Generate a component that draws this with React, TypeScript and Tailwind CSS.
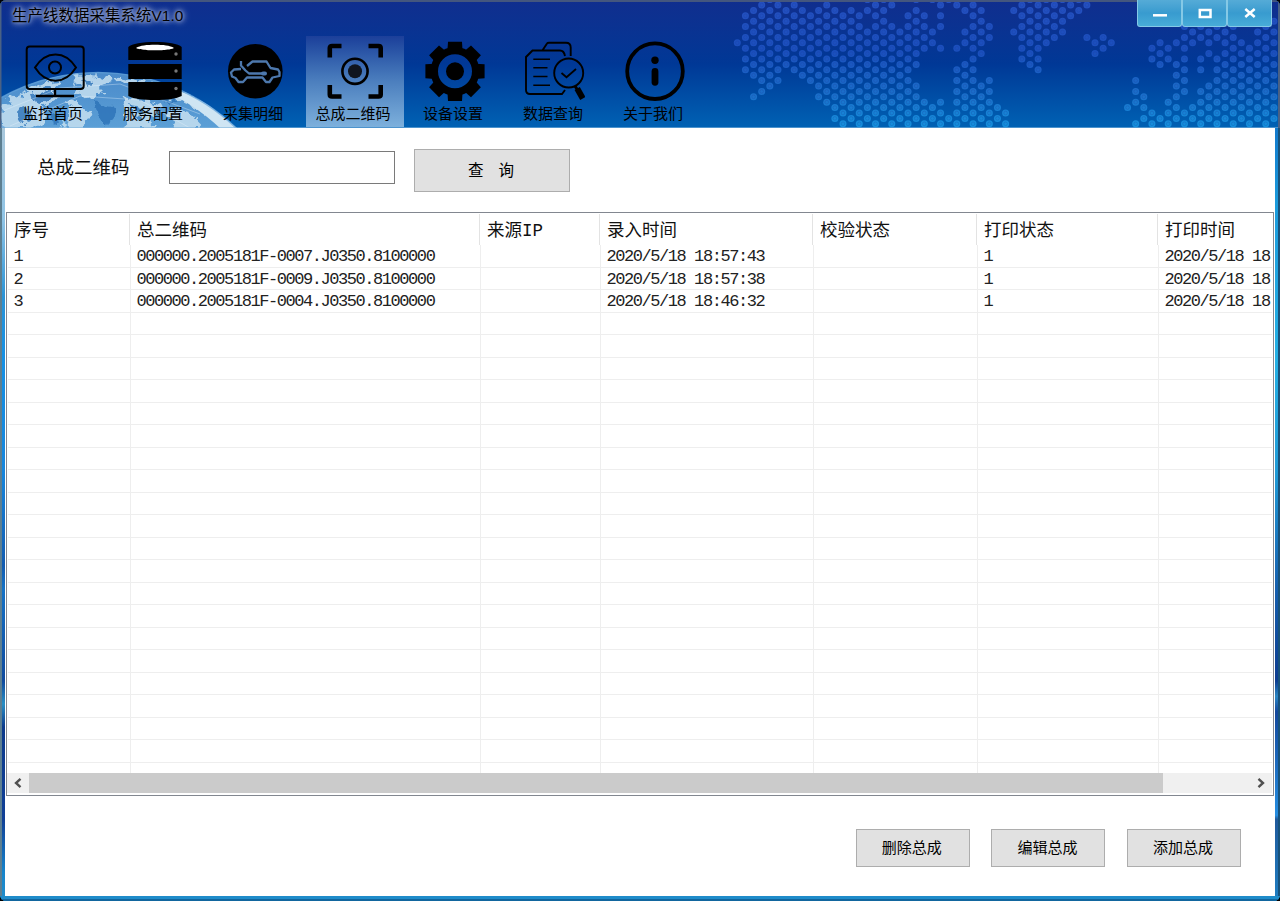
import type { ReactNode } from 'react';

const cjk = "font-['Liberation_Sans','Noto_Sans_CJK_SC',sans-serif]";
const mono = "font-['Liberation_Mono','Noto_Sans_CJK_SC',monospace]";

// Column number -> inclusive runs of half rows that carry a dot.
const DOTS: Record<number, number[][]> = {
  0: [[8, 8]], 1: [[3, 13]], 2: [[2, 14], [18, 18]], 3: [[1, 17]], 4: [[0, 16]], 5: [[1, 15]],
  6: [[2, 12]], 7: [[1, 13]], 8: [[2, 14]], 9: [[3, 15]], 10: [[2, 18]], 11: [[1, 19]],
  12: [[2, 22]], 13: [[3, 23]], 14: [[2, 22]], 15: [[3, 23]], 16: [[0, 2], [6, 22]], 17: [[1, 23]],
  18: [[0, 22]], 19: [[1, 1], [5, 23]], 20: [[6, 22]], 21: [[3, 23]], 22: [[0, 12], [16, 22]],
  23: [[3, 9], [19, 23]], 24: [[0, 0], [6, 8], [20, 22]], 25: [[1, 5], [9, 9], [19, 23]],
  26: [[0, 0], [22, 22]], 27: [[1, 1], [9, 9], [13, 23]], 28: [[2, 2], [6, 8], [12, 22]],
  29: [[1, 23]], 30: [[2, 10], [16, 22]], 31: [[5, 7], [15, 23]], 32: [[20, 22]], 33: [[21, 23]],
  34: [[2, 2], [6, 6]], 35: [[1, 11]], 36: [[0, 12]], 37: [[1, 13]], 38: [[0, 8]], 39: [[1, 7]],
  40: [[0, 6]], 41: [[1, 3]], 42: [[0, 2]], 43: [[1, 1], [7, 7]], 44: [[8, 10]], 45: [[7, 9]],
  46: [[8, 8]], 48: [[20, 20]], 49: [[15, 19], [23, 23]], 50: [[18, 22]], 51: [[9, 11], [21, 23]],
  52: [[8, 12], [22, 22]], 53: [[9, 11], [19, 23]], 54: [[8, 8], [12, 22]], 55: [[5, 17], [21, 23]],
  56: [[6, 8], [20, 22]], 57: [[5, 7], [11, 13], [17, 23]], 58: [[6, 10], [16, 22]],
  59: [[5, 7], [11, 23]], 60: [[6, 22]], 61: [[5, 23]], 62: [[8, 22]], 63: [[9, 23]],
  64: [[6, 22]], 65: [[5, 23]], 66: [[4, 22]],
};

const dots: { x: number; y: number }[] = [];
Object.entries(DOTS).forEach(([c, runs]) =>
  runs.forEach(([a, b]) => {
    for (let r = a; r <= b; r += 2) dots.push({ x: 737.3 + 8.13 * Number(c), y: r * 5.4 - 0.4 });
  }),
);

function HeaderArt() {
  return (
    <svg className="absolute inset-0" width="1280" height="128" viewBox="0 0 1280 128">
      <defs>
        <linearGradient id="dot" gradientUnits="userSpaceOnUse" x1="0" y1="0" x2="0" y2="128">
          <stop offset="0" stopColor="#2550c0" />
          <stop offset="0.4" stopColor="#1a4fbd" />
          <stop offset="0.75" stopColor="#1a70ca" />
          <stop offset="1" stopColor="#1492de" />
        </linearGradient>
        <linearGradient id="globe" gradientUnits="userSpaceOnUse" x1="0" y1="72" x2="0" y2="128">
          <stop offset="0" stopColor="#4a8aca" />
          <stop offset="1" stopColor="#5b9fd6" />
        </linearGradient>
        <clipPath id="disc">
          <circle cx="98" cy="272" r="200" />
        </clipPath>
        <filter id="soft">
          <feGaussianBlur stdDeviation="0.7" />
        </filter>
        <filter id="rough" x="-5%" y="-5%" width="110%" height="110%">
          <feTurbulence type="fractalNoise" baseFrequency="0.11" numOctaves="3" seed="4" />
          <feDisplacementMap in="SourceGraphic" scale="18" xChannelSelector="R" yChannelSelector="G" />
          <feGaussianBlur stdDeviation="0.6" />
        </filter>
      </defs>
      <g fill="url(#dot)">
        {dots.map((d, i) => (
          <circle key={i} cx={d.x} cy={d.y} r="3.5" />
        ))}
      </g>
      <g fill="none" stroke="#1b3d9c" strokeOpacity="0.28" strokeWidth="0.8">
        {dots.map((d, i) => (
          <circle key={i} cx={d.x} cy={d.y} r="1.8" />
        ))}
      </g>
      <g clipPath="url(#disc)">
        <circle cx="98" cy="272" r="200" fill="url(#globe)" />
        <g filter="url(#rough)">
          <path d="M5 128 L0 106 L24 92 L44 84 L62 81 L50 92 L60 97 L42 108 L48 117 L30 128Z M72 78 L96 75 L112 81 L98 88 L104 94 L88 98 L78 90Z M112 76 L150 82 L186 92 L214 108 L206 115 L188 104 L166 95 L140 90 L122 85Z M118 96 L142 98 L160 106 L150 118 L160 130 L122 130 L128 114Z M168 108 L190 113 L206 130 L176 130Z M66 100 L84 104 L92 114 L82 130 L62 130 L70 114Z" fill="#c6dff0" fillOpacity="0.85" />
          <path d="M30 98 L44 90 L52 96 L40 104Z M94 100 L110 104 L116 120 L104 127 L98 116Z M134 84 L160 92 L180 104 L164 102 L142 94Z M16 112 L28 108 L34 118 L22 125Z M132 106 L144 108 L138 118Z M82 80 L94 82 L88 87Z M46 118 L58 112 L60 124Z" fill="#2a72b8" fillOpacity="0.8" />
        </g>
        <path d="M0 112 L60 88 L120 84 L200 114 M10 126 L80 96 L140 100 L190 128" fill="none" stroke="#e8f4fb" strokeOpacity="0.45" strokeWidth="0.8" filter="url(#soft)" />
        <path d="M156 84 Q205 95 241 130 L222 130 Q194 103 156 87Z" fill="#cfe5f3" filter="url(#soft)" />
      </g>
      <circle cx="98" cy="272" r="199.5" fill="none" stroke="#5fa0d8" strokeOpacity="0.7" strokeWidth="1.6" />
      <path d="M0 127.5H1280" stroke="#7fb4dd" strokeOpacity="0.6" />
      <path d="M0.5 0V128M1279 0V128" stroke="#4a6184" strokeWidth="2" />
    </svg>
  );
}

const Ico = ({ children }: { children: ReactNode }) => (
  <svg width="60" height="60" viewBox="0 0 60 60" fill="none" stroke="#000" strokeWidth="2">
    {children}
  </svg>
);

const NAV: { label: string; icon: ReactNode; active?: boolean }[] = [
  {
    label: '监控首页',
    icon: (
      <Ico>
        <rect x="1.7" y="5.5" width="57" height="42.5" rx="3" />
        <path d="M10 26.5C21 9 40 9 51 26.5C40 44 21 44 10 26.5Z" />
        <circle cx="30" cy="26.5" r="6" />
        <path d="M30 48V55M11 55H49" strokeWidth="2.4" />
      </Ico>
    ),
  },
  {
    label: '服务配置',
    icon: (
      <Ico>
        <g stroke="none" fill="#000">
          <path d="M3.3 6C7 2.5 17 1 30 1S53 2.5 56.7 6V19H3.3Z" />
          <path d="M3.3 23H56.7V38H3.3ZM3.3 41H56.7V55C50 58 42 59 30 59S9 58 3.3 55Z" />
          <path d="M11 7C15 4.5 22 3.8 30 3.8S45 4.5 49 7C45 9 40 8.5 37 9.3H23C20 8.5 15 9 11 7Z" fill="#fff" />
          <g fill="#777">
            <circle cx="51" cy="13" r="1.7" />
            <circle cx="51" cy="30" r="1.7" />
            <circle cx="51" cy="47.5" r="1.7" />
          </g>
        </g>
      </Ico>
    ),
  },
  {
    label: '采集明细',
    icon: (
      <Ico>
        <circle cx="30.3" cy="30.3" r="27.3" fill="#000" stroke="none" />
        <path d="M16 20V24.5L20.5 29.5L24 32.5H38M22 25L27.5 20.5H41.5L45.5 27L53 28.5L54.5 31V35L47.5 36.5L44.5 41H41L37.5 36.5H22L18 41H13.5L10.5 37L7 35.5L6 31.5L9 28.5L16 28" stroke="#4d78ad" strokeWidth="2.3" strokeLinejoin="round" />
        <path d="M38 32.5H40" stroke="#4d78ad" strokeWidth="4" strokeLinecap="round" />
      </Ico>
    ),
  },
  {
    label: '总成二维码',
    active: true,
    icon: (
      <Ico>
        <path d="M4.8 16.5V7Q4.8 5 7 5H16.5M43.5 5H53.5Q55.7 5 55.7 7V16.5M55.7 44V53.5Q55.7 55.5 53.5 55.5H43.5M16.5 55.5H7Q4.8 55.5 4.8 53.5V44" strokeWidth="4.6" />
        <circle cx="30" cy="30.3" r="12.6" strokeWidth="2.6" />
        <circle cx="30" cy="30.3" r="7" fill="#10151f" stroke="none" />
      </Ico>
    ),
  },
  {
    label: '设备设置',
    icon: (
      <Ico>
        <circle cx="30" cy="30.3" r="20.7" strokeWidth="7.4" />
        {[0, 45, 90, 135, 180, 225, 270, 315].map((a) => (
          <path key={a} d="M22.4 10L23 0.7H37L37.6 10Z" fill="#000" stroke="none" transform={`rotate(${a} 30 30.3)`} />
        ))}
        <circle cx="30" cy="30.3" r="9" fill="#000" stroke="none" />
      </Ico>
    ),
  },
  {
    label: '数据查询',
    icon: (
      <Ico>
        <path d="M40 49L37 53H5Q1 53 1 49V16L7.5 9.5H35Q39 9.5 40 15M17.7 9L22 2.5Q22.5 1.7 24 1.7H41Q45.7 1.7 45.7 6.5V15" strokeWidth="1.9" />
        <path d="M8.3 18.3H25M8.3 26.7H22.5M8.3 35.5H22.5M8.3 44.2H25" strokeWidth="1.6" />
        <circle cx="43.7" cy="32" r="14.5" strokeWidth="1.9" />
        <path d="M36.5 32L41.5 36.3L51 28" strokeWidth="1.8" />
        <path d="M50 45L52.5 49" strokeWidth="3" />
        <path d="M52.2 47.5L57.8 57.5" strokeWidth="6" />
      </Ico>
    ),
  },
  {
    label: '关于我们',
    icon: (
      <Ico>
        <circle cx="30" cy="30.2" r="27.8" strokeWidth="3.8" />
        <circle cx="30" cy="19.2" r="3.7" fill="#000" stroke="none" />
        <path d="M30 30.5V41.3" strokeWidth="6.8" strokeLinecap="round" />
      </Ico>
    ),
  },
];

const COLS = 'grid grid-cols-[123px_350px_120px_213px_164px_181px_115px]';
const HEAD = ['序号', '总二维码', '来源IP', '录入时间', '校验状态', '打印状态', '打印时间'];
const ROWS = [
  ['1', '000000.2005181F-0007.J0350.8100000', '', '2020/5/18 18:57:43', '', '1', '2020/5/18 18'],
  ['2', '000000.2005181F-0009.J0350.8100000', '', '2020/5/18 18:57:38', '', '1', '2020/5/18 18'],
  ['3', '000000.2005181F-0004.J0350.8100000', '', '2020/5/18 18:46:32', '', '1', '2020/5/18 18'],
];
const EMPTY = ['', '', '', '', '', '', ''];

function WindowButton({ children }: { children: ReactNode }) {
  return (
    <button className="flex h-[27px] w-[45px] items-center justify-center rounded-b-[3px] border border-t-0 border-[#85c9e6] bg-linear-to-b from-[#55abd7] via-[#389bcf] to-[#48acd8]">
      <svg width="16" height="14" viewBox="0 0 16 14" fill="none" stroke="#fff" strokeWidth="2.5">
        {children}
      </svg>
    </button>
  );
}

function ActionButton({ label }: { label: string }) {
  return (
    <button className="flex h-[38px] w-[114px] items-center justify-center border border-[#adadad] bg-[#e1e1e1] pr-[2px] pb-[2px] text-[15px] leading-none text-black">
      {label}
    </button>
  );
}

export default function App() {
  return (
    <div className="h-[901px] w-[1280px] overflow-hidden bg-black">
      <div className={`relative flex h-full w-full flex-col overflow-hidden rounded-[6px] bg-[#1f88c4] text-[#111] ${cjk}`}>
        <header className="relative h-[128px] shrink-0 bg-linear-to-b from-[#102e8e] via-[#003896] to-[#0062b4]">
          <HeaderArt />
          <div className="absolute inset-x-0 top-0 h-[2px] bg-[#44567e]" />
          <div className="relative flex h-[36px] justify-between">
            <h1 className="pt-[8px] pl-[12px] text-[15.4px] leading-[16px] font-normal tracking-[0.1px] whitespace-nowrap text-black [text-shadow:0_0_3px_#8fa0cf,0_0_5px_#8fa0cf,0_0_6px_#8fa0cf,0_0_8px_#8fa0cf]">
              生产线数据采集系统V1.0
            </h1>
            <div className="mr-[8px] flex">
              <WindowButton><path d="M1 9.3H15" /></WindowButton>
              <WindowButton><path d="M2.8 4H13.5V11H2.8Z" /></WindowButton>
              <WindowButton><path d="M3.3 3L12.7 11M12.7 3L3.3 11" /></WindowButton>
            </div>
          </div>
          <nav className="relative flex gap-[2px] pl-[6px]">
            {NAV.map((n) => (
              <a
                key={n.label}
                className={`flex h-[91px] w-[98px] flex-col items-center pt-[5px] ${n.active ? 'bg-linear-to-b from-[#1c3f9a] via-[#4c7fbe] to-[#7db0dc]' : ''}`}
              >
                {n.icon}
                <span className="mt-[5px] -ml-[4px] text-[15px] leading-[16px] whitespace-nowrap text-black">{n.label}</span>
              </a>
            ))}
          </nav>
        </header>

        <div className="flex min-h-0 flex-1">
          <div className="w-[5px] shrink-0 border-l-2 border-[#5d7f91] bg-[linear-gradient(180deg,#a9c8dc_0%,#8fc4e6_12%,#2a93d6_22%,#1590e4_30%,#1685dc_45%,#125bb0_57%,#1572c6_60%,#0f4a9e_72%,#2a8fc4_75%,#0c3a8c_78%,#103f96_90%,#1685cc_97%,#1f8cca_100%)]" />
          <main className="flex w-[1270px] flex-col bg-white">
            <form className="flex h-[84px] shrink-0 items-start pl-[32px]">
              <label className="mt-[30px] w-[132px] text-[18.5px] leading-[20px]">总成二维码</label>
              <input className="mt-[23px] h-[33px] w-[226px] border border-[#7a7a7a] bg-white" />
              <button type="button" className="mt-[21px] ml-[19px] flex h-[43px] w-[156px] items-center justify-center gap-[15px] border border-[#adadad] bg-[#e1e1e1] pr-[2px] text-[15.5px] leading-none text-black">
                <span>查</span>
                <span>询</span>
              </button>
            </form>

            <section className={`mx-[1px] flex h-[584px] shrink-0 flex-col border border-[#828790] pr-px ${mono}`}>
              <div className={`${COLS} h-[32px] shrink-0 overflow-hidden pt-px`}>
                {HEAD.map((h) => (
                  <div key={h} className="border-r border-[#e3e3e3] pt-[7px] pl-[7px] text-[17.5px] leading-[20px] whitespace-nowrap last:border-0">
                    {h}
                  </div>
                ))}
              </div>
              <div className="h-[528px] shrink-0 overflow-hidden">
                {Array.from({ length: 24 }, (_, i) => ROWS[i] ?? EMPTY).map((row, i) => (
                  <div key={i} className={`${COLS} ml-px h-[22.5px] border-b border-[#eeeeee]`}>
                    {row.map((v, j) => (
                      <div key={j} className="overflow-hidden border-r border-[#eeeeee] pl-[5.5px] text-[17px] leading-[23px] tracking-[-1.44px] whitespace-pre text-[#222] last:border-0">
                        {v}
                      </div>
                    ))}
                  </div>
                ))}
              </div>
              <div className="flex h-[20px] shrink-0 items-center bg-[#f0f0f0]">
                <svg width="22" height="20" viewBox="0 0 22 20" fill="none" stroke="#505050" strokeWidth="2.4">
                  <path d="M13.5 5.8L9 10L13.5 14.2" />
                </svg>
                <div className="h-full w-[1135px] bg-[#cbcbcb]" />
                <svg className="ml-[87px]" width="22" height="20" viewBox="0 0 22 20" fill="none" stroke="#505050" strokeWidth="2.4">
                  <path d="M8.5 5.8L13 10L8.5 14.2" />
                </svg>
              </div>
            </section>

            <footer className="flex justify-end gap-[21.6px] pt-[33px] pr-[34px]">
              <ActionButton label="删除总成" />
              <ActionButton label="编辑总成" />
              <ActionButton label="添加总成" />
            </footer>
          </main>
          <div className="w-[5px] shrink-0 border-r-2 border-[#18527b] bg-[linear-gradient(180deg,#1279cc_0%,#1b9bdc_10%,#25b0e4_30%,#1f9ad6_45%,#155fae_60%,#0c3c90_72%,#2a86c4_74%,#12479c_76%,#258de0_89.5%,#1f5a9c_90%,#1f7cc0_100%)]" />
        </div>
        <div className="h-[5px] shrink-0 border-b-2 border-[#12669e] bg-[#1f8cca]" />
      </div>
    </div>
  );
}
